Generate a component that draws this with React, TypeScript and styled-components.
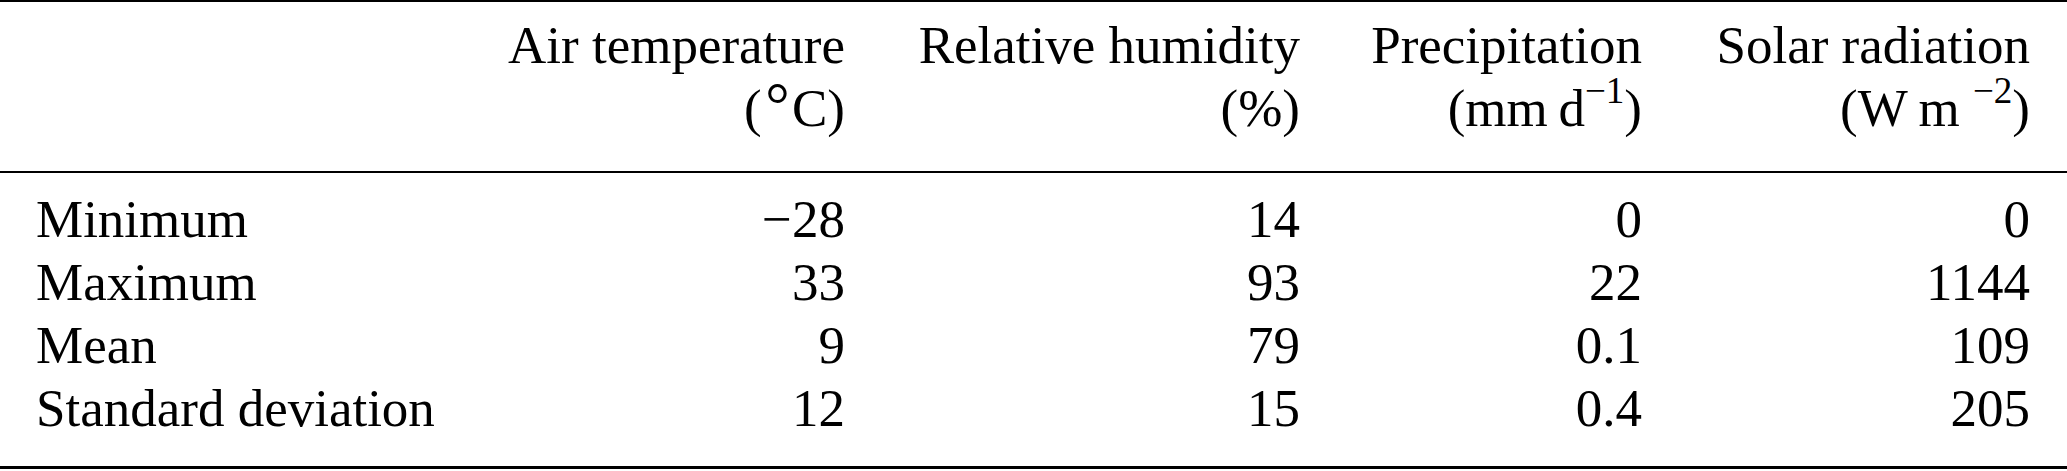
import React from "react";
import styled, { createGlobalStyle } from "styled-components";

const GlobalStyle = createGlobalStyle`
  html, body {
    margin: 0;
    padding: 0;
    background: #ffffff;
  }
  body {
    font-family: "Liberation Serif", "Times New Roman", serif;
    color: #000000;
  }
`;

const COLS = "1fr 400px 455px 342px 388px";

const Table = styled.div`
  width: 2067px;
  font-family: "Liberation Serif", "Times New Roman", serif;
  font-size: 53px;
  line-height: 63px;
  color: #000;
`;

const Head = styled.div`
  display: grid;
  grid-template-columns: ${COLS};
  padding: 12px 37px 31px 36px;
  border-top: 2px solid #000;
  border-bottom: 2px solid #000;
`;

const Body = styled.div`
  display: grid;
  grid-template-columns: ${COLS};
  padding: 15px 37px 26px 36px;
  border-bottom: 3px solid #000;
`;

const HeadCell = styled.div`
  display: flex;
  flex-direction: column;
  align-items: flex-end;
  white-space: nowrap;
`;

const Cell = styled.div<{ $align?: "left" | "right" }>`
  text-align: ${(p) => (p.$align === "left" ? "left" : "right")};
  white-space: nowrap;
`;

const Sup = styled.span`
  font-size: 0.7em;
  line-height: 0;
  vertical-align: 0.62em;
`;

const Deg = styled.span`
  font-size: 1.15em;
  line-height: 0;
  vertical-align: 0.02em;
  margin: 0 0.04em 0 0.06em;
`;

type Column = { title: string; unit: React.ReactNode };

const columns: Column[] = [
  {
    title: "Air temperature",
    unit: (
      <>
        (<Deg>°</Deg>C)
      </>
    ),
  },
  { title: "Relative humidity", unit: "(%)" },
  {
    title: "Precipitation",
    unit: (
      <>
        (mm{"\u2009"}d<Sup>−1</Sup>)
      </>
    ),
  },
  {
    title: "Solar radiation",
    unit: (
      <>
        (W{"\u2009"}m <Sup>−2</Sup>)
      </>
    ),
  },
];

const rows: { label: string; values: string[] }[] = [
  { label: "Minimum", values: ["−28", "14", "0", "0"] },
  { label: "Maximum", values: ["33", "93", "22", "1144"] },
  { label: "Mean", values: ["9", "79", "0.1", "109"] },
  { label: "Standard deviation", values: ["12", "15", "0.4", "205"] },
];

export default function App() {
  return (
    <>
      <GlobalStyle />
      <Table>
        <Head>
          <div />
          {columns.map((c) => (
            <HeadCell key={c.title}>
              <span>{c.title}</span>
              <span>{c.unit}</span>
            </HeadCell>
          ))}
        </Head>
        <Body>
          {rows.map((r) => (
            <React.Fragment key={r.label}>
              <Cell $align="left">{r.label}</Cell>
              {r.values.map((v, i) => (
                <Cell key={i}>{v}</Cell>
              ))}
            </React.Fragment>
          ))}
        </Body>
      </Table>
    </>
  );
}
